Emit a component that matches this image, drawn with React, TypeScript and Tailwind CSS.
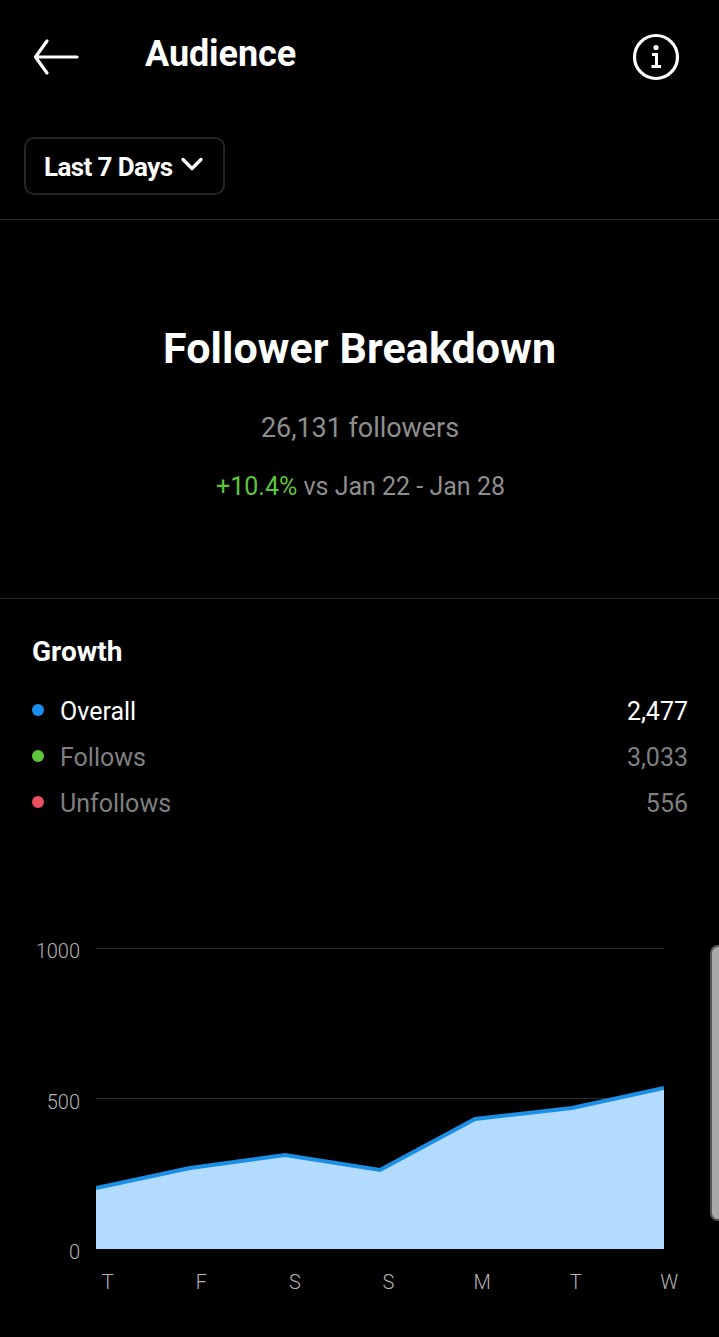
import React from 'react';
import { ChevronDown } from 'lucide-react';

const LEGEND = [
  { label: 'Overall', value: '2,477', dot: 'bg-[#1a8ff0]', text: 'text-white' },
  { label: 'Follows', value: '3,033', dot: 'bg-[#5ec43c]', text: 'text-[#7f7f7f]' },
  { label: 'Unfollows', value: '556', dot: 'bg-[#e8505f]', text: 'text-[#7f7f7f]' },
];

const DAYS = ['T', 'F', 'S', 'S', 'M', 'T', 'W'];

// chart coordinates: svg origin sits at x=96, y=948
const LINE = '0,240 94,220 189,207 284,222 379,171 476,160 568,140';

export default function App() {
  return (
    <div className="relative w-[719px] h-[1337px] overflow-hidden bg-black text-white font-['Roboto',sans-serif]">
      <header className="flex h-[107px] items-start justify-between pl-[32px] pr-[39px]">
        <div className="flex items-start">
          <svg width="48" height="38" viewBox="0 0 48 38" className="mt-[38px]" fill="none" stroke="white" strokeWidth="3.2" strokeLinecap="round" strokeLinejoin="round">
            <path d="M45 19H4M15 3L3.5 19L15 35" />
          </svg>
          <h1 className="ml-[65px] mt-[33px] text-[36px] leading-[42px] font-bold tracking-[-0.1px]">Audience</h1>
        </div>
        <svg width="48" height="48" viewBox="0 0 48 48" className="mt-[33px]" fill="none" stroke="white">
          <circle cx="24" cy="24" r="21.5" strokeWidth="3.2" />
          <circle cx="24" cy="14.5" r="2.6" fill="white" stroke="none" />
          <path d="M20 21.5h4.5v12M19.5 33.5h9.5" strokeWidth="3" />
        </svg>
      </header>

      <div className="h-[113px] border-b border-[#262626] pl-[24px] pt-[30px]">
        <button className="flex h-[58px] w-[201px] items-center rounded-[10px] border-2 border-[#262626] pl-[18px] pt-[3px] text-[26px] font-bold tracking-[-0.6px]">
          Last 7 Days
          <ChevronDown size={36} strokeWidth={3.4} absoluteStrokeWidth className="ml-[2px] -mt-[7px]" />
        </button>
      </div>

      <section className="flex h-[379px] flex-col items-center border-b border-[#262626] pt-[100px]">
        <h2 className="text-[43px] leading-[56px] font-bold tracking-[0.1px]">Follower Breakdown</h2>
        <p className="mt-[34px] pl-[1px] text-[27px] leading-[36px] tracking-[-0.05px] text-[#8e8e8e]">26,131 followers</p>
        <p className="mt-[23px] pl-[2px] text-[25px] leading-[36px] text-[#8e8e8e]">
          <span className="text-[#5ec43c]">+10.4%</span> vs Jan 22 - Jan 28
        </p>
      </section>

      <section className="px-[32px] pt-[35px]">
        <h3 className="text-[28px] leading-[36px] font-bold">Growth</h3>
        <ul className="mt-[24px] flex flex-col gap-[10px]">
          {LEGEND.map((row) => (
            <li key={row.label} className={`flex h-[36px] items-center justify-between text-[25px] ${row.text}`}>
              <span className="flex items-center">
                <span className={`-mt-[4px] mr-[16px] h-[12px] w-[12px] rounded-full ${row.dot}`} />
                {row.label}
              </span>
              <span className="-mr-[1px]">{row.value}</span>
            </li>
          ))}
        </ul>
      </section>

      <section className="mt-[126px]">
        <div className="flex">
          <div className="flex h-[319px] w-[80px] flex-col justify-between text-right text-[20px] leading-[30px] font-light text-[#b4b4b4]">
            <span className="-mt-[12px]">1000</span>
            <span>500</span>
            <span>0</span>
          </div>
          <svg width="568" height="301" viewBox="0 0 568 301" className="ml-[16px] block">
            <path d="M0 0.5H568M0 150.5H568" stroke="#2b2b2b" strokeWidth="1" fill="none" />
            <polygon points={`0,301 ${LINE} 568,301`} fill="#b3daff" />
            <polyline points={LINE} fill="none" stroke="#1b8fe3" strokeWidth="4" />
          </svg>
        </div>
        <div className="mt-[1px] ml-[61px] grid w-[655px] grid-cols-7 text-center text-[20px] leading-[28px] font-light text-[#b4b4b4]">
          {DAYS.map((day, i) => (
            <span key={i}>{day}</span>
          ))}
        </div>
      </section>

      {/* edge panel handle lying over the page */}
      <div className="absolute right-0 top-[945px] h-[276px] w-[9px] rounded-l-[8px] border-2 border-r-0 border-[#555] bg-[#a9a9a9]" />
    </div>
  );
}
